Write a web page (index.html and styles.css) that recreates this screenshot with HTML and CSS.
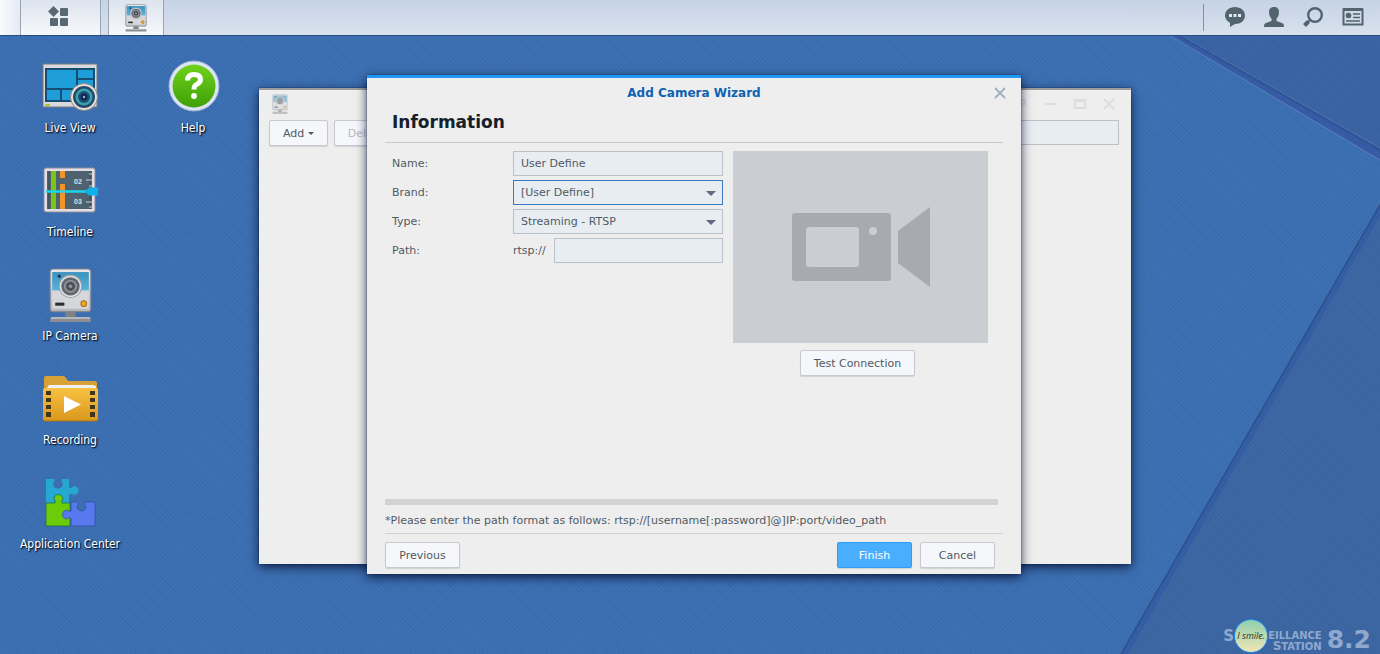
FILE: index.html
```html
<!DOCTYPE html>
<html lang="en">
<head>
  <meta charset="UTF-8">
  <meta name="viewport" content="width=device-width, initial-scale=1.0">
  <title>Surveillance Station</title>
  <link rel="stylesheet" href="styles.css">
</head>
<body>
  <!-- Shared camera icon, used on the desktop, taskbar and window -->
  <svg class="sprite" aria-hidden="true">
    <defs>
      <linearGradient id="metal" x1="0" y1="0" x2="0" y2="1"><stop offset="0" stop-color="#e9e9ec"/><stop offset="1" stop-color="#b4b5b8"/></linearGradient>
      <linearGradient id="sky" x1="0" y1="0" x2="0" y2="1"><stop offset="0" stop-color="#3a93c0"/><stop offset="1" stop-color="#5cb3dc"/></linearGradient>
      <linearGradient id="gold" x1="0" y1="0" x2="0" y2="1"><stop offset="0" stop-color="#f8c142"/><stop offset="1" stop-color="#d9981c"/></linearGradient>
      <linearGradient id="leaf" x1="0" y1="0" x2="0" y2="1"><stop offset="0" stop-color="#6fd21a"/><stop offset="1" stop-color="#3fa008"/></linearGradient>
    </defs>
    <symbol id="camera" viewBox="0 0 42 54">
      <rect x="16" y="43" width="10" height="6" fill="#7e8083"/>
      <path d="M2 48h38l1 2v3H1v-3z" fill="#8b8d90"/>
      <path d="M2 49h38" stroke="#c4c6c9" stroke-width="1.5"/>
      <rect x="1" y="1" width="40" height="42" rx="3" fill="url(#metal)" stroke="#7d7f86"/>
      <rect x="3" y="4" width="36" height="19" fill="url(#sky)"/>
      <rect x="3" y="22" width="36" height="18" fill="#d5d7da"/>
      <circle cx="21" cy="18" r="11" fill="#dfe2e4" stroke="#9da1a6"/>
      <circle cx="21" cy="18" r="9" fill="#60646b"/>
      <circle cx="21" cy="18" r="6.500" fill="#8d9097"/>
      <circle cx="21" cy="18" r="4.500" fill="#4c4f58"/>
      <circle cx="21" cy="18" r="1.800" fill="#8f929a"/>
      <circle cx="10" cy="8" r="1.500" fill="#1d3044"/>
      <rect x="6" y="34" width="9" height="3" fill="#2c2d30"/>
      <circle cx="34" cy="35" r="2.800" fill="#f2a51c" stroke="#a2742a"/>
    </symbol>
  </svg>

  <div class="screen">
    <!-- Wallpaper folds -->
    <svg class="wallpaper" viewBox="0 0 1380 654" preserveAspectRatio="xMaxYMin slice" aria-hidden="true">
      <path d="M1118 0H1380V148Z" fill="#3a62a0" opacity=".85"/>
      <path d="M1110 0H1118L1380 148V160Z" fill="#365ba5"/>
      <path d="M1118 0L1380 148" stroke="#6183b8" opacity=".7"/>
      <path d="M1120 2L1380 150" stroke="#28508c" stroke-width="2" opacity=".6"/>
      <path d="M1110 0L1380 160" stroke="#6d94c8" opacity=".6"/>
      <path d="M1122 654L1380 206V654Z" fill="#3b66a2"/>
      <path d="M1122 654L1380 206V216L1128 654Z" fill="#345da5"/>
      <path d="M1121 654L1380 205" stroke="#2c4f88" stroke-width="1.5"/>
    </svg>

    <header class="taskbar">
      <div class="edge"></div>
      <button class="task menu" aria-label="Main menu">
        <svg width="21" height="21" viewBox="0 0 21 21" fill="#586973">
          <path d="M5.500 0L11 5.500 5.500 11 0 5.500Z"/>
          <rect x="12" y="2" width="8" height="8" rx="1"/>
          <rect x="2" y="12" width="8" height="8" rx="1"/>
          <rect x="12" y="12" width="8" height="8" rx="1"/>
        </svg>
      </button>
      <button class="task app" aria-label="IP Camera"><svg width="22" height="28"><use href="#camera"/></svg></button>
      <nav class="tray">
        <button aria-label="Messages">
          <svg width="20" height="20" viewBox="0 0 20 20"><path d="M10 0C4.400 0 0 3.500 0 8.500c0 3.300 2 5.900 5 7.200V20l5-3c5.600 0 10-3.500 10-8.500S15.600 0 10 0Z" fill="#52646e"/><path d="M4 7h3v3H4zM8.500 7h3v3h-3zM13 7h3v3h-3z" fill="#e0e7ef"/></svg>
        </button>
        <button aria-label="User">
          <svg width="20" height="20" viewBox="0 0 20 20"><path d="M10 0C6.500 0 5 2 5 5c0 2.500.8 5 2.500 6.500V14L2 16c-1.500.6-2 1.500-2 4h20c0-2.500-.5-3.400-2-4l-5.500-2v-2.500C14.200 10 15 7.500 15 5c0-3-1.500-5-5-5Z" fill="#52646e"/></svg>
        </button>
        <button aria-label="Search">
          <svg width="20" height="20" viewBox="0 0 20 20" fill="none" stroke="#52646e"><circle cx="12" cy="8" r="6.800" stroke-width="2.400"/><path d="M7 13l-2 2" stroke-width="2"/><path d="M5.500 14.500L1.500 18.500" stroke-width="4"/></svg>
        </button>
        <button aria-label="Widgets">
          <svg width="22" height="20" viewBox="0 0 22 20"><path d="M1.500 2.500h19v15h-19z" fill="none" stroke="#52646e" stroke-width="2"/><path d="M1 1h20v3H1z" fill="#52646e"/><circle cx="6.500" cy="8.500" r="2.800" fill="#52646e"/><path d="M11 7h7M11 10.500h7M4 14h14" stroke="#52646e" stroke-width="1.500"/></svg>
        </button>
      </nav>
    </header>

    <main class="desktop">
      <div class="icons">
        <a href="#" class="shortcut">
          <svg width="60" height="60" viewBox="0 0 60 60">
            <rect x="3" y="6" width="54" height="43" fill="#d9d9dd" stroke="#77797f"/>
            <rect x="5" y="10" width="50" height="34" fill="#174d73"/>
            <path d="M7 12h29v18H7zM38 12h15v8H38zM38 22h15v8H38zM7 32h13v10H7zM22 32h14v10H22z" fill="#1e9ed9"/>
            <rect x="5" y="46" width="5" height="2" fill="#a9c92b"/>
            <circle cx="44" cy="39" r="13.500" fill="#e6e3de" stroke="#8b8985"/>
            <circle cx="44" cy="39" r="11" fill="#27496a"/>
            <circle cx="44" cy="39" r="8.500" fill="#36a4ae"/>
            <circle cx="44" cy="39" r="6" fill="#1d5078"/>
            <circle cx="44" cy="39" r="3.500" fill="#142650"/>
            <circle cx="44" cy="39" r="1.200" fill="#8eb5d0"/>
          </svg>
          <span>Live View</span>
        </a>
        <a href="#" class="shortcut">
          <svg width="60" height="60" viewBox="0 0 60 60">
            <rect x="4" y="6" width="51" height="44" rx="2" fill="#e2dde6" stroke="#8e8c99"/>
            <rect x="7" y="9" width="45" height="38" fill="#4f626f"/>
            <path d="M9 9v38M50 9v38" stroke="#3a4955"/>
            <rect x="11" y="9" width="5" height="38" fill="#7dc515"/>
            <path d="M20 9h5v7h-5zM20 22h5v25h-5z" fill="#f29526"/>
            <path d="M49 12h4M46 18h7M49 24h4M46 40h7M49 45h4" stroke="#c9d1d4"/>
            <text x="34" y="22" class="tick">02</text>
            <text x="34" y="42" class="tick">03</text>
            <path d="M6 29.500h41" stroke="#17d6ee" stroke-width="2.500"/>
            <path d="M45 29.500l4-4h9v8h-9z" fill="#0eb1e8"/>
          </svg>
          <span>Timeline</span>
        </a>
        <a href="#" class="shortcut">
          <svg width="60" height="60" viewBox="0 0 60 60"><use href="#camera" x="9" y="2" width="43" height="55"/></svg>
          <span>IP Camera</span>
        </a>
        <a href="#" class="shortcut">
          <svg width="60" height="60" viewBox="0 0 60 60">
            <path d="M4 8q0-2 2-2h17q2 0 3 2l2 3h27q2 0 2 2v15H4z" fill="#d8a136"/>
            <path d="M7 18l2-3h44l3 1v5H7z" fill="#eef0f2"/>
            <path d="M3 20q0-2 2-2h51q2 0 2 2v29q0 2-2 2H5q-2 0-2-2z" fill="url(#gold)"/>
            <path d="M3 49.500q0 1.500 2 1.500h51q2 0 2-2" fill="none" stroke="#a8731a"/>
            <path d="M6 21h5v4H6zM6 28h5v4H6zM6 35h5v4H6zM6 42h5v5H6zM50 21h5v4h-5zM50 28h5v4h-5zM50 35h5v4h-5zM50 42h5v5h-5z" fill="#40351d"/>
            <path d="M24 26l17 8.500L24 43z" fill="#fff"/>
          </svg>
          <span>Recording</span>
        </a>
        <a href="#" class="shortcut">
          <svg width="60" height="60" viewBox="0 0 60 60">
            <path d="M6 5h8q1 3-1 5c0 6 10 6 10 0q-2-2-1-5h7v9q3 0 5-2c6 0 6 9 0 9q-2-2-5-1v9H6z" fill="#25a9d2"/>
            <path d="M6 29h9q1-2-1-4c0-6 9-6 9 0q-2 2-1 4h8v23H6z" fill="#6bcc0a" stroke="#1f6f4c" stroke-width=".8"/>
            <path d="M31 28h7q1 3-1 5c0 5 9 5 9 0q-2-2-1-5h10v24H31v-8q-2-1-4 1c-6 0-6-9 0-9q2 2 4 1z" fill="#5878ef" stroke="#31569e" stroke-width=".8"/>
          </svg>
          <span>Application Center</span>
        </a>
      </div>
      <div class="icons">
        <a href="#" class="shortcut">
          <svg width="60" height="60" viewBox="0 0 60 60">
            <circle cx="31" cy="28" r="25" fill="#dbe5f3" stroke="#9db1cf"/>
            <circle cx="31" cy="28" r="21.500" fill="url(#leaf)"/>
            <path d="M24.500 22.500q0-6 6.500-6t6.500 5q0 3-4 5-2.500 1-2.500 5" fill="none" stroke="#fff" stroke-width="5"/>
            <circle cx="31" cy="38" r="2.900" fill="#fff"/>
          </svg>
          <span>Help</span>
        </a>
      </div>
    </main>

    <!-- IP Camera window -->
    <section class="window">
      <div class="window-bar">
        <svg class="faded" width="16" height="20"><use href="#camera"/></svg>
        <div class="window-tools">
          <button aria-label="Help"><svg width="12" height="12" viewBox="0 0 12 12"><path d="M3 4V2h6v4H6v3" /></svg></button>
          <button aria-label="Minimize"><svg width="12" height="12" viewBox="0 0 12 12"><path d="M0 6h12"/></svg></button>
          <button aria-label="Maximize"><svg width="12" height="12" viewBox="0 0 12 12"><path d="M1 2h10v8H1zM1 3h10"/></svg></button>
          <button aria-label="Close"><svg width="12" height="12" viewBox="0 0 12 12"><path d="M1 1l10 10M11 1L1 11"/></svg></button>
        </div>
      </div>
      <div class="toolbar">
        <button class="button">Add <i class="caret"></i></button>
        <button class="button" disabled>Delete</button>
        <input type="text" class="field search" aria-label="Search cameras">
      </div>
    </section>

    <!-- Wizard dialog -->
    <form class="wizard" role="dialog" aria-labelledby="wizardTitle">
      <div class="wizard-bar">
        <h1 id="wizardTitle">Add Camera Wizard</h1>
        <button type="button" class="close" aria-label="Close"><svg width="12" height="12" viewBox="0 0 12 12"><path d="M1 1l10 10M11 1L1 11" stroke="#a3b2bf" stroke-width="2"/></svg></button>
      </div>
      <h2>Information</h2>
      <div class="wizard-body">
        <div class="fields">
          <label for="name">Name:</label>
          <input type="text" id="name" class="field" value="User Define">
          <label for="brand">Brand:</label>
          <div class="select active">
            <select id="brand" class="field"><option>[User Define]</option></select>
          </div>
          <label for="type">Type:</label>
          <div class="select">
            <select id="type" class="field"><option>Streaming - RTSP</option></select>
          </div>
          <label for="path">Path:</label>
          <div class="path"><span>rtsp://</span><input type="text" id="path" class="field"></div>
        </div>
        <div class="preview">
          <svg viewBox="0 0 255 192" fill="#a7aaaf">
            <rect x="59" y="62" width="99" height="68" rx="3"/>
            <rect x="73" y="76" width="53" height="40" rx="3" fill="#cacdd2"/>
            <circle cx="140" cy="80" r="4" fill="#cacdd2"/>
            <path d="M165 80L197 56V136L165 112Z"/>
          </svg>
          <button type="button" class="button">Test Connection</button>
        </div>
      </div>
      <div class="divider"></div>
      <p class="note">*Please enter the path format as follows: rtsp://[username[:password]@]IP:port/video_path</p>
      <div class="actions">
        <button type="button" class="button">Previous</button>
        <button type="submit" class="button primary">Finish</button>
        <button type="button" class="button">Cancel</button>
      </div>
    </form>

    <!-- Product name with the user badge set into it -->
    <footer class="brand">
      <b class="initial">S</b>
      <div class="badge">I smile.</div>
      <div class="brand-name">
        <span>EILLANCE</span>
        <span><b>S</b>TATION</span>
      </div>
      <strong>8.2</strong>
    </footer>
  </div>
</body>
</html>
```
FILE: styles.css
```css
* {
  box-sizing: border-box;
}
body {
  margin: 0;
  font-family: "DejaVu Sans", Verdana, sans-serif;
  font-size: 11px;
  color: #505a64;
}
button, input, select {
  font: inherit;
  color: inherit;
}
button {
  cursor: pointer;
}
svg {
  display: block;
}
.sprite {
  position: absolute;
  width: 0;
  height: 0;
}
.screen {
  position: relative;
  height: 100vh;
  overflow: hidden;
  background-color: #3b6fb2;
}
.wallpaper {
  position: absolute;
  top: 0;
  left: 0;
  width: 100%;
  height: 100%;
}
/* fine woven texture over the wallpaper */
.screen::before {
  content: "";
  position: absolute;
  inset: 0;
  z-index: 1;
  background: repeating-linear-gradient(45deg, rgba(15, 50, 110, 0.06) 0 1px, transparent 1px 3px),
    repeating-linear-gradient(-45deg, rgba(255, 255, 255, 0.02) 0 1px, transparent 1px 3px);
}

/* Taskbar */
.taskbar {
  position: relative;
  z-index: 2;
  display: flex;
  height: 36px;
  background: linear-gradient(rgba(202, 215, 233, 0.97), rgba(222, 229, 239, 0.97));
  border-bottom: 1px solid #264d80;
}
.edge {
  width: 20px;
  background: linear-gradient(to right, #f9fafc, #e6ebf3);
}
.task {
  display: flex;
  justify-content: center;
  align-items: center;
  padding: 0;
  border: solid #9aa5b3;
  border-width: 0 1px;
  background: linear-gradient(#dde4ee, #f6f8fb);
}
.task.menu {
  width: 81px;
  margin-right: 7px;
  padding-right: 4px;
  padding-bottom: 2px;
}
.task.app {
  width: 56px;
}
.tray {
  display: flex;
  align-items: center;
  gap: 19px;
  margin: 4px 16px 4px auto;
  padding: 0 0 2px 21px;
  border-left: 1px solid #8391a2;
}
.tray button {
  padding: 0;
  border: none;
  background: none;
}

/* Desktop shortcuts */
.desktop {
  position: relative;
  z-index: 2;
  display: flex;
  gap: 3px;
  padding: 22px 10px;
}
.icons {
  display: flex;
  flex-direction: column;
  gap: 24px;
}
.shortcut {
  display: flex;
  flex-direction: column;
  align-items: center;
  width: 120px;
  color: #fff;
  font-family: "DejaVu Sans Condensed", Tahoma, sans-serif;
  font-size: 12px;
  line-height: 20px;
  text-decoration: none;
  text-shadow: 1px 1px 1px #0b1c38, 1px 1px 2px #0b1c38;
}
.tick {
  fill: #dbe4e6;
  font: bold 7px "Liberation Sans", sans-serif;
  text-shadow: none;
}

/* Form controls */
.button {
  height: 26px;
  padding: 0 13px;
  border: 1px solid #c6cad0;
  border-radius: 2px;
  background: #f5f7fb;
  box-shadow: 0 1px 1px rgba(0, 0, 0, 0.12);
  white-space: nowrap;
}
.button:disabled {
  color: #b4b9bf;
}
.button.primary {
  border-color: #2f9bf4;
  background: #4aaeff;
  color: #fff;
}
.field {
  width: 100%;
  min-width: 0;
  height: 25px;
  padding: 0 7px;
  border: 1px solid #b9c0c7;
  border-radius: 0;
  background: #e8edf2;
  outline: none;
}
.select {
  position: relative;
}
.select .field {
  display: block;
  appearance: none;
}
.select.active .field {
  border-color: #3a7cc0;
}
.select::after {
  content: "";
  position: absolute;
  top: 11px;
  right: 7px;
  border: 5px solid transparent;
  border-top-color: #5d6b7c;
  border-bottom: none;
  pointer-events: none;
}
.caret {
  display: inline-block;
  border: 3px solid transparent;
  border-top-color: #505a64;
  border-bottom: none;
  vertical-align: middle;
}

/* Camera window */
.window {
  position: absolute;
  z-index: 3;
  top: 88px;
  right: 249px;
  bottom: 90px;
  left: 259px;
  border-top: 2px solid #9b9c9c;
  background: #eee;
  box-shadow: 0 0 1px #071c4c, 0 3px 10px rgba(0, 10, 40, 0.8);
}
.window-bar {
  display: flex;
  justify-content: space-between;
  align-items: center;
  height: 28px;
  padding: 0 16px 0 13px;
}
.faded {
  opacity: 0.6;
}
.window-tools {
  display: flex;
  gap: 17px;
}
.window-tools button {
  padding: 0;
  border: none;
  background: none;
}
.window-tools path {
  fill: none;
  stroke: #dcdddf;
  stroke-width: 2;
}
.toolbar {
  display: flex;
  gap: 6px;
  padding: 2px 12px 0 10px;
}
.search {
  width: 200px;
  margin-left: auto;
}

/* Wizard */
.wizard {
  position: absolute;
  z-index: 4;
  top: 75px;
  right: 359px;
  bottom: 80px;
  left: 367px;
  display: flex;
  flex-direction: column;
  padding: 0 18px 6px;
  border-top: 3px solid #1e97f7;
  background: #eee;
  box-shadow: 0 0 1px #071c4c, 0 3px 10px rgba(0, 10, 40, 0.8);
}
.wizard-bar {
  display: flex;
  align-items: center;
  height: 30px;
  margin-right: -3px;
}
.wizard-bar h1 {
  flex: 1;
  margin: 0;
  padding-left: 9px;
  font-size: 12px;
  text-align: center;
  color: #0d62b3;
}
.close {
  padding: 0;
  border: none;
  background: none;
}
.wizard h2 {
  margin: 0;
  padding: 0 7px 6px;
  border-bottom: 1px solid #c9cacc;
  font-size: 17px;
  line-height: 28px;
  color: #15202b;
}
.wizard-body {
  display: flex;
  flex: 1;
  align-items: flex-start;
  gap: 10px;
  padding: 8px 15px 0 7px;
}
.fields {
  display: grid;
  grid-template-columns: 121px 1fr;
  row-gap: 4px;
  flex: 1;
  align-items: center;
}
.path {
  display: flex;
  align-items: center;
  gap: 8px;
}
.preview {
  display: flex;
  flex-direction: column;
  align-items: center;
  gap: 7px;
  width: 255px;
}
.preview svg {
  width: 100%;
  background: #cacdd2;
}
.preview .button {
  margin-right: 6px;
}
.divider {
  height: 6px;
  margin-right: 5px;
  background: #d2d2d2;
}
.note {
  margin: 0;
  padding: 6px 0 3px;
  border-bottom: 1px solid #cfd0d1;
  line-height: 19px;
}
.actions {
  display: flex;
  gap: 8px;
  padding: 8px 8px 0 0;
}
.actions .button {
  min-width: 75px;
}
.actions .primary {
  margin-left: auto;
}

/* Corner logo */
.brand {
  position: absolute;
  z-index: 2;
  right: 9px;
  bottom: 1px;
  display: flex;
  align-items: center;
  color: #8fa9ce;
  font-weight: bold;
}
.initial {
  font-size: 15px;
}
.brand-name {
  display: flex;
  flex-direction: column;
  align-items: flex-end;
  margin-right: 5px;
  padding-top: 9px;
  font-size: 10px;
  line-height: 11px;
}
.brand-name b {
  font-size: 12px;
}
.brand strong {
  padding-top: 8px;
  font-size: 25px;
  line-height: 26px;
}
.badge {
  width: 34px;
  height: 34px;
  border: 1px solid #1c8cf5;
  border-radius: 50%;
  background: linear-gradient(#8fcfae, #efe6b4);
  color: #26332c;
  font: italic 9px/32px "Open Sans", sans-serif;
  text-align: center;
  white-space: nowrap;
}

@media (max-width: 1000px) {
  .window {
    right: 20px;
    left: 150px;
  }
  .wizard {
    right: 40px;
    left: 190px;
  }
}
```
